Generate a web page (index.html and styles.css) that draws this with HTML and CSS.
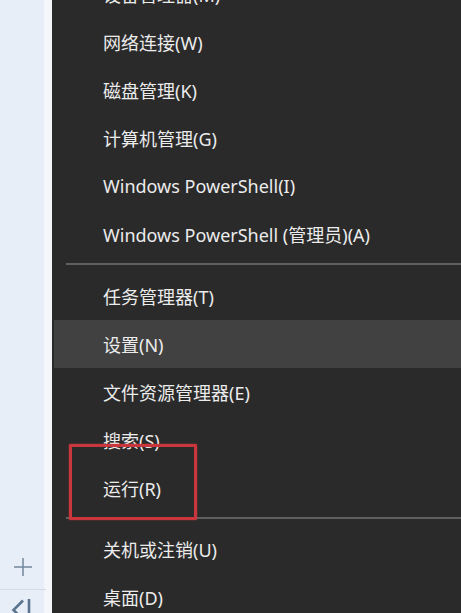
FILE: index.html
```html
<!DOCTYPE html>
<html lang="zh-CN">
<head>
<meta charset="utf-8">
<link rel="stylesheet" href="styles.css">
</head>
<body>
<div class="screen">
  <aside class="side">
    <div class="side-plus">
      <svg width="20" height="20" viewBox="0 0 20 20"><path d="M10 1V19M1 10H19" stroke="#71879a" stroke-width="1.5" fill="none"/></svg>
    </div>
    <div class="side-bottom">
      <svg width="30" height="24" viewBox="0 0 30 24"><path d="M15 2.5L5.5 12L15 21.5" stroke="#5c7490" stroke-width="2.6" fill="none" stroke-linejoin="miter"/><path d="M21 1V24" stroke="#5c7490" stroke-width="2.6"/></svg>
    </div>
  </aside>
  <nav class="menu">
    <div class="item">设备管理器(M)</div>
    <div class="item">网络连接(W)</div>
    <div class="item">磁盘管理(K)</div>
    <div class="item">计算机管理(G)</div>
    <div class="item">Windows PowerShell(I)</div>
    <div class="item">Windows PowerShell (管理员)(A)</div>
    <div class="sep"></div>
    <div class="item">任务管理器(T)</div>
    <div class="item hover">设置(N)</div>
    <div class="item">文件资源管理器(E)</div>
    <div class="item">搜索(S)</div>
    <div class="item marked">运行(R)<span class="mark"></span></div>
    <div class="sep sep2"></div>
    <div class="item">关机或注销(U)</div>
    <div class="item">桌面(D)</div>
  </nav>
</div>
</body>
</html>
```
FILE: styles.css
```css
html, body {
  margin: 0;
  padding: 0;
  width: 461px;
  height: 613px;
  overflow: hidden;
  background: #2a2a2a;
}
.screen {
  display: flex;
  width: 461px;
  height: 613px;
  overflow: hidden;
}
.side {
  width: 44px;
  border-right: 8px solid #f4f6fa;
  background: #e8eef8;
  display: flex;
  flex-direction: column;
  justify-content: flex-end;
  flex-shrink: 0;
}
.side-plus {
  height: 45px;
  display: flex;
  align-items: center;
  justify-content: center;
  margin-right: -8px;
  border-bottom: 1.5px solid #d3dbe5;
  width: 46px;
}
.side-bottom {
  height: 23px;
  display: flex;
  align-items: flex-start;
  justify-content: center;
  width: 52px;
  margin-right: -8px;
  overflow: hidden;
}
.side-bottom svg {
  margin-top: 8px;
  margin-left: -6px;
}
.menu {
  flex: 1;
  background: #2a2a2a;
  margin-top: -30px;
  display: flex;
  flex-direction: column;
  font-family: "Noto Sans", "Noto Sans CJK SC", sans-serif;
  font-size: 18px;
  color: #ececec;
}
.item {
  height: 48px;
  flex-shrink: 0;
  display: flex;
  align-items: center;
  padding-left: 51px;
  white-space: nowrap;
  position: relative;
}
.item.hover {
  background: #414141;
  margin-left: 2px;
  padding-left: 49px;
}
.sep {
  flex-shrink: 0;
  height: 2px;
  margin: 5px 0 7px 14px;
  background: #5f5f5f;
}
.sep2 {
  margin: 5px 0 6px 14px;
}
.mark {
  position: absolute;
  left: 17px;
  top: -20px;
  width: 122px;
  height: 70px;
  border: 3px solid #c9363b;
  box-shadow: 0 0 2px rgba(220, 70, 70, 0.6);
  border-radius: 1px;
}
```
